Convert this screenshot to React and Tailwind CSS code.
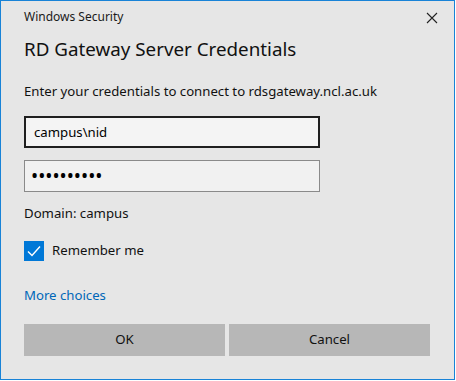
import { useState } from 'react';

export default function App() {
    const [remember, setRemember] = useState(true);
    const [user, setUser] = useState('campus\\nid');
    const [pass, setPass] = useState('abcdefghij');

    return (
        <div className="w-[456px] h-[381px] bg-white">
            <div
                className="w-[455px] h-[380px] bg-[#e6e6e6] border border-[#1883d7] flex flex-col text-[#000]"
                style={{ fontFamily: '"Noto Sans", "Open Sans", sans-serif' }}
            >
                {/* title bar */}
                <div className="flex items-center justify-between h-[32px] pl-[23px] pr-[16px]">
                    <span className="text-[12px] text-[#1a1a1a]">Windows Security</span>
                    <svg width="12" height="12" viewBox="0 0 12 12" className="mt-[2px]">
                        <path d="M1 1 L11 11 M11 1 L1 11" stroke="#222" strokeWidth="1.1" fill="none" />
                    </svg>
                </div>

                <div className="pl-[23px] pr-[23px]">
                    <h1 className="text-[18.8px] leading-[26px] mt-[3px] text-[#111]">RD Gateway Server Credentials</h1>
                    <p className="text-[13.2px] leading-[20px] mt-[19px] text-[#111]">
                        Enter your credentials to connect to rdsgateway.ncl.ac.uk
                    </p>

                    <input
                        value={user}
                        onChange={e => setUser(e.target.value)}
                        className="block mt-[15px] w-[296px] h-[32px] px-[8px] bg-[#f4f4f4] border-2 border-[#1f1f1f] text-[13.2px] outline-none"
                    />
                    <input
                        type="password"
                        value={pass}
                        onChange={e => setPass(e.target.value)}
                        className="block mt-[12px] w-[296px] h-[32px] px-[6px] bg-[#f1f1f1] border border-[#8a8a8a] text-[19px] tracking-[0px] outline-none"
                    />

                    <p className="text-[13.2px] leading-[20px] mt-[11px] text-[#111]">Domain: campus</p>

                    <label className="flex items-center gap-[8px] mt-[18px] cursor-pointer" onClick={() => setRemember(!remember)}>
                        <span className={`w-[20px] h-[20px] flex items-center justify-center ${remember ? 'bg-[#0078d7]' : 'border-2 border-[#333]'}`}>
                            {remember && (
                                <svg width="14" height="12" viewBox="0 0 14 12">
                                    <path d="M1 6.5 L5 10.5 L13 1.5" stroke="#fff" strokeWidth="1.4" fill="none" />
                                </svg>
                            )}
                        </span>
                        <span className="text-[13.2px] text-[#111]">Remember me</span>
                    </label>

                    <a href="#" className="block text-[13.2px] leading-[20px] mt-[24px] text-[#0067b8]">More choices</a>

                    <div className="flex gap-[4px] mt-[19px] w-[406px]">
                        <button className="flex-1 h-[32px] bg-[#b7b7b7] text-[13.2px] text-[#111]">OK</button>
                        <button className="flex-1 h-[32px] bg-[#b7b7b7] text-[13.2px] text-[#111]">Cancel</button>
                    </div>
                </div>
            </div>
        </div>
    );
}
